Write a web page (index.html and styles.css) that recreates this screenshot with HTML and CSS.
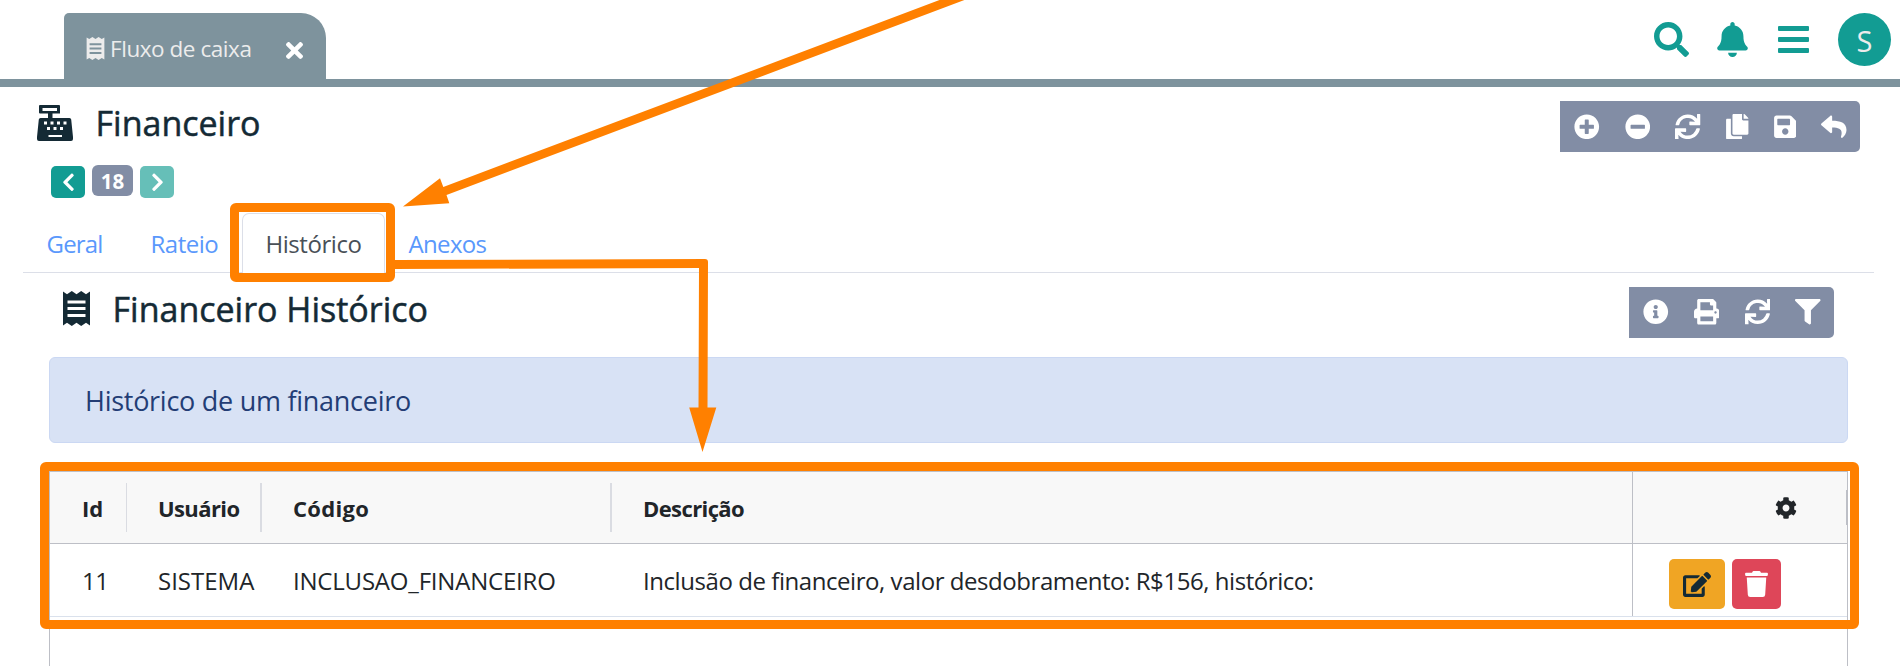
FILE: index.html
```
<!DOCTYPE html>
<html lang="pt-BR">
<head>
<meta charset="utf-8">
<title>Fluxo de caixa</title>
<link rel="stylesheet" href="styles.css">
</head>
<body>
<svg class="defs" width="0" height="0">
  <symbol id="receipt" viewBox="0 0 27 35"><path fill-rule="evenodd" d="M0 0.6L4 3.2L8.8 0L13.500 3.200L18.200 0L23 3.200L27 .6V34.400L23 31.800L18.200 35L13.500 31.800L8.800 35L4 31.800L0 34.400ZM4.500 9.500V12.500H22.500V9.500ZM4.500 16V19H22.500V16ZM4.500 23V26H22.500V23Z"/></symbol>
  <symbol id="sync" viewBox="0 0 512 512"><path d="M440.65 12.57l4 82.77A247.16 247.16 0 0 0 255.83 8C134.73 8 33.91 94.92 12.29 209.82A12 12 0 0 0 24.09 224h49.05a12 12 0 0 0 11.67-9.26 175.91 175.91 0 0 1 317-56.94l-101.46-4.86a12 12 0 0 0-12.57 12v47.41a12 12 0 0 0 12 12H500a12 12 0 0 0 12-12V12a12 12 0 0 0-12-12h-47.37a12 12 0 0 0-11.98 12.57zM255.83 432a175.61 175.61 0 0 1-146-77.8l101.8 4.87a12 12 0 0 0 12.57-12v-47.4a12 12 0 0 0-12-12H12a12 12 0 0 0-12 12V500a12 12 0 0 0 12 12h47.35a12 12 0 0 0 12-12.6l-4.15-82.57A247.17 247.17 0 0 0 255.83 504c121.11 0 221.93-86.92 243.55-201.82a12 12 0 0 0-11.8-14.18h-49.05a12 12 0 0 0-11.67 9.26A175.86 175.86 0 0 1 255.83 432z"/></symbol>
</svg>

<header class="topbar">
  <div class="page-tab">
    <svg class="tab-icon"><use href="#receipt"/></svg>
    <span class="tab-label">Fluxo de caixa</span>
    <svg class="tab-close" viewBox="0 80 352 352"><path d="M242.72 256l100.07-100.07c12.28-12.28 12.28-32.19 0-44.48l-22.24-22.24c-12.28-12.28-32.19-12.28-44.48 0L176 189.28 75.93 89.21c-12.28-12.28-32.19-12.28-44.48 0L9.21 111.45c-12.28 12.28-12.28 32.19 0 44.48L109.28 256 9.21 356.07c-12.28 12.28-12.28 32.19 0 44.48l22.24 22.24c12.28 12.28 32.2 12.28 44.48 0L176 322.72l100.07 100.07c12.28 12.28 32.2 12.28 44.48 0l22.24-22.24c12.28-12.28 12.28-32.19 0-44.48L242.72 256z"/></svg>
  </div>
  <div class="top-actions">
    <svg class="i-search" viewBox="0 0 512 512"><path d="M505 442.7L405.3 343c-4.500-4.500-10.600-7-17-7H372c27.600-35.300 44-79.700 44-128C416 93.100 322.900 0 208 0S0 93.100 0 208s93.100 208 208 208c48.300 0 92.700-16.400 128-44v16.300c0 6.400 2.500 12.500 7 17l99.700 99.700c9.400 9.400 24.600 9.400 33.900 0l28.300-28.300c9.400-9.400 9.400-24.600.1-34zM208 336c-70.700 0-128-57.200-128-128 0-70.700 57.200-128 128-128 70.700 0 128 57.200 128 128 0 70.700-57.200 128-128 128z"/></svg>
    <svg class="i-bell" viewBox="0 0 448 512"><path d="M224 512c35.320 0 63.970-28.650 63.970-64H160.030c0 35.350 28.650 64 63.970 64zm215.390-149.710c-19.320-20.760-55.470-51.990-55.470-154.290 0-77.700-54.480-139.900-127.940-155.160V32c0-17.670-14.320-32-31.980-32s-31.980 14.330-31.980 32v20.840C118.560 68.100 64.080 130.300 64.080 208c0 102.300-36.150 133.530-55.470 154.290-6 6.450-8.660 14.160-8.610 21.710.11 16.400 12.980 32 32.100 32h383.800c19.120 0 32-15.600 32.100-32 .05-7.550-2.610-15.270-8.610-21.710z"/></svg>
    <svg class="i-menu" viewBox="0 0 31 27"><path d="M1 0h29a1 1 0 0 1 1 1v3a1 1 0 0 1-1 1H1a1 1 0 0 1-1-1V1a1 1 0 0 1 1-1zm0 11h29a1 1 0 0 1 1 1v3a1 1 0 0 1-1 1H1a1 1 0 0 1-1-1v-3a1 1 0 0 1 1-1zm0 11h29a1 1 0 0 1 1 1v3a1 1 0 0 1-1 1H1a1 1 0 0 1-1-1v-3a1 1 0 0 1 1-1z"/></svg>
    <span class="avatar">S</span>
  </div>
</header>

<main>
  <div class="title-row">
    <svg class="i-register" viewBox="0 0 36 36"><path fill-rule="evenodd" d="M3 0H22Q23 0 23 1V8.500H15.500V13H32.500Q34 13 34.200 14.500L36 32V34Q36 36 34 36H2Q0 36 0 34V32L1.800 14.500Q2 13 3.500 13H11V8.500H3Q2 8.500 2 7.500V1Q2 0 3 0ZM5.500 3V6H20V3ZM7 16.500V19.500H10V16.500ZM13.500 16.500V19.500H16.500V16.500ZM20 16.500V19.500H23V16.500ZM26.500 16.500V19.500H29.500V16.500ZM10 22V25H13V22ZM16.500 22V25H19.500V22ZM23 22V25H26V22ZM11.500 30V32H25V30Z"/></svg>
    <h1>Financeiro</h1>
    <div class="toolbar toolbar-main">
      <svg viewBox="0 0 512 512"><path d="M256 8C119 8 8 119 8 256s111 248 248 248 248-111 248-248S393 8 256 8zm144 276c0 6.600-5.400 12-12 12h-92v92c0 6.600-5.400 12-12 12h-56c-6.600 0-12-5.400-12-12v-92h-92c-6.600 0-12-5.400-12-12v-56c0-6.600 5.400-12 12-12h92v-92c0-6.600 5.400-12 12-12h56c6.600 0 12 5.400 12 12v92h92c6.600 0 12 5.400 12 12v56z"/></svg>
      <svg viewBox="0 0 512 512"><path d="M256 8C119 8 8 119 8 256s111 248 248 248 248-111 248-248S393 8 256 8zM124 296c-6.600 0-12-5.400-12-12v-56c0-6.600 5.400-12 12-12h264c6.600 0 12 5.400 12 12v56c0 6.600-5.400 12-12 12H124z"/></svg>
      <svg><use href="#sync"/></svg>
      <svg class="narrow" viewBox="0 0 448 512"><path d="M320 448v40c0 13.255-10.745 24-24 24H24c-13.255 0-24-10.745-24-24V120c0-13.255 10.745-24 24-24h72v296c0 30.879 25.121 56 56 56h168zm0-344V0H152c-13.255 0-24 10.745-24 24v368c0 13.255 10.745 24 24 24h272c13.255 0 24-10.745 24-24V128H344c-13.200 0-24-10.800-24-24zm120.971-31.029L375.029 7.029A24 24 0 0 0 358.059 0H352v96h96v-6.059a24 24 0 0 0-7.029-16.970z"/></svg>
      <svg class="narrow" viewBox="0 0 448 512"><path d="M433.941 129.941l-83.882-83.882A48 48 0 0 0 316.118 32H48C21.490 32 0 53.490 0 80v352c0 26.510 21.490 48 48 48h352c26.510 0 48-21.490 48-48V163.882a48 48 0 0 0-14.059-33.941zM224 416c-35.346 0-64-28.654-64-64 0-35.346 28.654-64 64-64s64 28.654 64 64c0 35.346-28.654 64-64 64zm96-304.520V212c0 6.627-5.373 12-12 12H76c-6.627 0-12-5.373-12-12V108c0-6.627 5.373-12 12-12h228.520c3.183 0 6.235 1.264 8.485 3.515l3.480 3.480A11.996 11.996 0 0 1 320 111.480z"/></svg>
      <svg viewBox="0 0 512 512"><path d="M8.309 189.836L184.313 37.851C199.719 24.546 224 35.347 224 56.015v80.053c160.629 1.839 288 34.032 288 186.258 0 61.441-39.581 122.309-83.333 154.132-13.653 9.931-33.111-2.533-28.077-18.631 45.344-145.012-21.507-183.510-176.590-185.742V360c0 20.700-24.300 31.453-39.687 18.164l-176.004-152c-11.071-9.562-11.086-26.753 0-36.328z"/></svg>
    </div>
  </div>

  <div class="pager">
    <button class="page-btn"><svg viewBox="0 0 320 512"><path d="M34.520 239.030L228.870 44.690c9.370-9.370 24.570-9.370 33.940 0l22.670 22.670c9.360 9.360 9.370 24.520.04 33.900L131.490 256l154.020 154.750c9.340 9.380 9.320 24.540-.04 33.900l-22.670 22.670c-9.370 9.370-24.570 9.370-33.940 0L34.520 272.970c-9.370-9.370-9.370-24.570 0-33.940z"/></svg></button>
    <span class="page-num">18</span>
    <button class="page-btn next"><svg viewBox="0 0 320 512"><path d="M34.520 239.030L228.870 44.690c9.370-9.370 24.570-9.370 33.940 0l22.670 22.670c9.360 9.360 9.370 24.520.04 33.900L131.490 256l154.020 154.750c9.340 9.380 9.320 24.540-.04 33.900l-22.670 22.670c-9.370 9.370-24.570 9.370-33.940 0L34.520 272.970c-9.370-9.370-9.370-24.570 0-33.940z"/></svg></button>
  </div>

  <nav class="tabs">
    <a class="tab tab-geral">Geral</a>
    <a class="tab tab-rateio">Rateio</a>
    <a class="tab tab-hist active">Histórico</a>
    <a class="tab tab-anexos">Anexos</a>
  </nav>

  <div class="title-row sub">
    <svg class="i-receipt"><use href="#receipt"/></svg>
    <h2>Financeiro Histórico</h2>
    <div class="toolbar toolbar-sub">
      <svg viewBox="0 0 512 512"><path d="M256 8C119.043 8 8 119.083 8 256c0 136.997 111.043 248 248 248s248-111.003 248-248C504 119.083 392.957 8 256 8zm0 110c23.196 0 42 18.804 42 42s-18.804 42-42 42-42-18.804-42-42 18.804-42 42-42zm56 254c0 6.627-5.373 12-12 12h-88c-6.627 0-12-5.373-12-12v-24c0-6.627 5.373-12 12-12h12v-64h-12c-6.627 0-12-5.373-12-12v-24c0-6.627 5.373-12 12-12h64c6.627 0 12 5.373 12 12v100h12c6.627 0 12 5.373 12 12v24z"/></svg>
      <svg viewBox="0 0 512 512"><path d="M448 192V77.250c0-8.490-3.370-16.620-9.370-22.630L393.370 9.370c-6-6-14.140-9.370-22.630-9.370H96C78.330 0 64 14.330 64 32v160c-35.350 0-64 28.650-64 64v112c0 8.840 7.160 16 16 16h48v96c0 17.670 14.330 32 32 32h320c17.670 0 32-14.330 32-32v-96h48c8.840 0 16-7.160 16-16V256c0-35.350-28.650-64-64-64zm-64 256H128v-96h256v96zm0-224H128V64h192v48c0 8.840 7.160 16 16 16h48v96zm48 72c-13.250 0-24-10.750-24-24 0-13.260 10.750-24 24-24s24 10.740 24 24c0 13.250-10.750 24-24 24z"/></svg>
      <svg><use href="#sync"/></svg>
      <svg viewBox="0 0 512 512"><path d="M487.976 0H24.028C2.710 0-8.047 25.866 7.058 40.971L192 225.941V432c0 7.831 3.821 15.170 10.237 19.662l80 55.980C298.020 518.690 320 507.493 320 487.980V225.941l184.947-184.970C520.021 25.896 509.338 0 487.976 0z"/></svg>
    </div>
  </div>

  <div class="alert">Histórico de um financeiro</div>

  <section class="grid">
    <div class="grid-row grid-head">
      <div class="cell sep"><span>Id</span></div>
      <div class="cell sep"><span class="th-user">Usuário</span></div>
      <div class="cell sep"><span class="th-code">Código</span></div>
      <div class="cell"><span class="th-desc">Descrição</span></div>
      <div class="cell act"><svg class="i-cog" viewBox="0 0 512 512"><path d="M487.400 315.700l-42.600-24.600c4.300-23.200 4.300-47 0-70.200l42.600-24.600c4.900-2.800 7.100-8.600 5.500-14-11.100-35.600-30-67.800-54.700-94.600-3.800-4.100-10-5.100-14.800-2.300L380.800 110c-17.900-15.400-38.500-27.300-60.800-35.100V25.800c0-5.600-3.900-10.500-9.400-11.700-36.700-8.200-74.300-7.800-109.200 0-5.500 1.200-9.400 6.100-9.400 11.700V75c-22.200 7.900-42.800 19.800-60.800 35.100L88.700 85.500c-4.900-2.800-11-1.900-14.800 2.300-24.700 26.700-43.600 58.900-54.700 94.600-1.700 5.400.6 11.200 5.500 14L67.300 221c-4.300 23.200-4.300 47 0 70.200l-42.600 24.600c-4.900 2.800-7.100 8.600-5.500 14 11.100 35.600 30 67.800 54.700 94.600 3.800 4.100 10 5.100 14.800 2.300l42.600-24.600c17.900 15.400 38.500 27.300 60.800 35.100v49.200c0 5.600 3.900 10.500 9.400 11.700 36.700 8.200 74.300 7.800 109.200 0 5.500-1.200 9.400-6.100 9.400-11.700v-49.200c22.200-7.900 42.800-19.800 60.800-35.100l42.600 24.600c4.900 2.800 11 1.900 14.800-2.300 24.700-26.700 43.600-58.900 54.700-94.600 1.500-5.500-.7-11.300-5.600-14.100zM256 336c-44.100 0-80-35.900-80-80s35.900-80 80-80 80 35.900 80 80-35.900 80-80 80z"/></svg><i class="handle"></i></div>
    </div>
    <div class="grid-row grid-body">
      <div class="cell"><span class="td-id">11</span></div>
      <div class="cell"><span class="td-user">SISTEMA</span></div>
      <div class="cell"><span class="td-code">INCLUSAO_FINANCEIRO</span></div>
      <div class="cell"><span class="td-desc">Inclusão de financeiro, valor desdobramento: R$156, histórico:</span></div>
      <div class="cell act">
        <button class="btn-edit"><svg viewBox="0 0 576 512"><path d="M402.600 83.200l90.200 90.200c3.800 3.800 3.800 10 0 13.800L274.400 405.600l-92.800 10.300c-12.400 1.400-22.900-9.100-21.500-21.500l10.300-92.800L388.800 83.200c3.800-3.800 10-3.800 13.800 0zm162-22.900l-48.800-48.800c-15.200-15.200-39.900-15.200-55.200 0l-35.400 35.400c-3.800 3.800-3.800 10 0 13.800l90.200 90.200c3.800 3.800 10 3.800 13.800 0l35.400-35.400c15.200-15.300 15.200-40 0-55.200zM384 346.200V448H64V128h229.800c3.200 0 6.200-1.300 8.500-3.500l40-40c7.600-7.600 2.200-20.500-8.500-20.500H48C21.500 64 0 85.500 0 112v352c0 26.500 21.500 48 48 48h352c26.500 0 48-21.500 48-48V306.200c0-10.700-12.900-16-20.500-8.500l-40 40c-2.200 2.300-3.500 5.300-3.500 8.500z"/></svg></button>
        <button class="btn-trash"><svg viewBox="0 0 448 512"><path d="M432 32H312l-9.400-18.700A24 24 0 0 0 281.100 0H166.800a23.720 23.720 0 0 0-21.400 13.300L136 32H16A16 16 0 0 0 0 48v32a16 16 0 0 0 16 16h416a16 16 0 0 0 16-16V48a16 16 0 0 0-16-16zM53.200 467a48 48 0 0 0 47.900 45h245.800a48 48 0 0 0 47.900-45L416 128H32z"/></svg></button>
      </div>
    </div>
  </section>
</main>

<svg class="marks" viewBox="0 0 1900 666">
  <rect x="234.500" y="207.500" width="156" height="70" rx="1.500"/>
  <rect x="44.500" y="466.500" width="1810" height="158" rx="1.500"/>
  <path class="solid" d="M403 206.500L440 178.300L443.300 187L939.500 0H964.400L446.500 195L449.300 203.200Z"/>
  <path class="solid" d="M394 260L705 259Q708 259 708 262L707.500 407.500H716.300L702.500 452L689.200 407.500H698.500L699 268L394 269Z"/>
</svg>
</body>
</html>
```

FILE: styles.css
```
* { box-sizing: border-box; }
body {
  margin: 0;
  height: 666px;
  overflow: hidden;
  position: relative;
  background: #fff;
  color: #212529;
  font-family: "Open Sans", "Noto Sans", sans-serif;
}
svg { display: block; flex: none; fill: currentColor; }
.defs { position: absolute; }
button { border: 0; padding: 0; display: flex; align-items: center; justify-content: center; color: #fff; }
span, h1, h2 { white-space: nowrap; }

.topbar {
  height: 87px;
  border-bottom: 8px solid #7e939d;
  padding: 13px 9px 0 64px;
  display: flex;
  justify-content: space-between;
}
.page-tab {
  width: 262px;
  height: 66px;
  background: #7e939d;
  border-radius: 5px 25px 0 0;
  padding: 4px 23px 0 22px;
  display: flex;
  align-items: center;
  color: #ececec;
}
.tab-icon { width: 19px; height: 23px; margin-right: 5px; }
.tab-label { font-size: 22.5px; letter-spacing: -0.45px; }
.tab-close { width: 17px; height: 17px; margin: 5px 0 0 auto; color: #fff; }
.top-actions { display: flex; height: 53px; color: #129c93; align-items: center; }
.i-search { width: 35px; height: 35px; margin-right: 28px; }
.i-bell { width: 31px; height: 35px; margin-right: 30px; }
.i-menu { width: 31px; height: 27px; margin-right: 29px; }
.avatar {
  width: 53px; height: 53px; border-radius: 50%;
  background: #129c93; color: #ececec;
  font-size: 29px; line-height: 55px; text-align: center;
}

.title-row { display: flex; align-items: center; height: 72px; padding: 0 40px 0 37px; color: #142a35; }
.title-row h1, .title-row h2 {
  margin: 0; font-size: 34px; font-weight: 500; line-height: 46px;
  -webkit-text-stroke: 0.5px currentColor;
}
.i-register { width: 36px; height: 36px; margin-right: 22.5px; }
.toolbar {
  margin: 7px 0 0 auto; height: 51px; background: #828da5; color: #fff;
  border-radius: 0 5px 5px 0;
  display: flex; align-items: center; justify-content: space-between;
  padding: 0 13px 0 14px;
}
.toolbar svg { width: 25.5px; height: 25.5px; }
.toolbar .narrow { width: 22.5px; }
.toolbar-main { width: 300px; }
.toolbar-sub { width: 205px; }

.pager { display: flex; height: 54px; padding: 7px 0 0 51px; gap: 7px; align-items: flex-start; }
.page-btn { width: 34px; height: 32px; border-radius: 5px; background: #129c93; }
.page-btn svg { width: 13px; height: 20.5px; }
.page-btn.next { background: #66bfb8; }
.page-btn.next svg { transform: scaleX(-1); }
.page-num {
  width: 41px; height: 31px; margin-top: -1px; border-radius: 6px;
  background: #828da5; color: #fff; font-size: 20.5px; font-weight: 700;
  line-height: 32px; text-align: center;
}

.tabs { display: flex; height: 60px; margin: 0 26px 0 23px; border-bottom: 1px solid #dcdfe8; }
.tab {
  height: 60px; padding: 0 22.5px; font-size: 24px; line-height: 59px; color: #5a98fc;
  border: 1px solid transparent; border-bottom: 0;
}
.tab-geral { width: 104px; letter-spacing: -0.8px; }
.tab-rateio { width: 115px; letter-spacing: -0.5px; }
.tab-hist { width: 143px; letter-spacing: -0.45px; }
.tab-anexos { letter-spacing: -0.65px; }
.tab.active { border-color: #dcdfe8; border-radius: 7px 7px 0 0; background: #fff; color: #495057; }

.title-row.sub { height: 71px; padding: 0 66px 0 63px; }
.i-receipt { width: 27px; height: 35px; margin-right: 22.5px; }

.alert {
  height: 86px; margin: 13px 52px 28px 49px; padding-left: 35px;
  border: 1px solid #cbd8f3; border-radius: 6px; background: #d8e2f5; color: #233d75;
  font-size: 27px; line-height: 86px; letter-spacing: -0.27px;
}

.grid { height: 200px; margin: 0 52px 0 49px; border: 1px solid #bdbfc6; border-bottom: 0; }
.grid-row { display: grid; grid-template-columns: 77px 135px 350px 1020px 1fr; }
.grid-head { height: 72px; background: #f8f8f8; border-bottom: 1px solid #bdbfc6; font-weight: 700; font-size: 22px; }
.grid-body { height: 73px; border-bottom: 1px solid #dae1ec; font-size: 24px; }
.cell { display: flex; align-items: center; padding: 0 0 0 31px; }
.cell:first-child { padding-left: 32px; }
.th-user { letter-spacing: -0.6px; }
.th-code { letter-spacing: 0.3px; }
.th-desc { letter-spacing: -0.6px; }
.td-id { letter-spacing: -0.5px; }
.td-code { letter-spacing: -0.2px; }
.td-desc { letter-spacing: -0.44px; }
.sep::after {
  content: ""; margin-left: auto;
  width: 2px; height: 49px; background: #dadce2;
}
.sep:first-child::after { width: 1px; }
.act { border-left: 1px solid #bdbfc6; padding: 0 0 0 36px; }
.i-cog { width: 22px; height: 22px; margin-left: 105.5px; }
.handle { margin-left: auto; width: 1px; height: 35px; background: #bdbfc6; }
.btn-edit { width: 56px; height: 50px; margin: 8px 7px 0 0; border-radius: 5px; background: #f0a524; color: #142a35; }
.btn-edit svg { width: 28px; height: 25px; }
.btn-trash { width: 49px; height: 50px; margin-top: 8px; border-radius: 5px; background: #de4659; }
.btn-trash svg { width: 23px; height: 26px; }

.marks { position: absolute; inset: 0; width: 1900px; height: 666px; fill: none; stroke: #ff8000; stroke-width: 9; stroke-linejoin: round; pointer-events: none; }
.solid { fill: #ff8000; stroke: none; }
```
